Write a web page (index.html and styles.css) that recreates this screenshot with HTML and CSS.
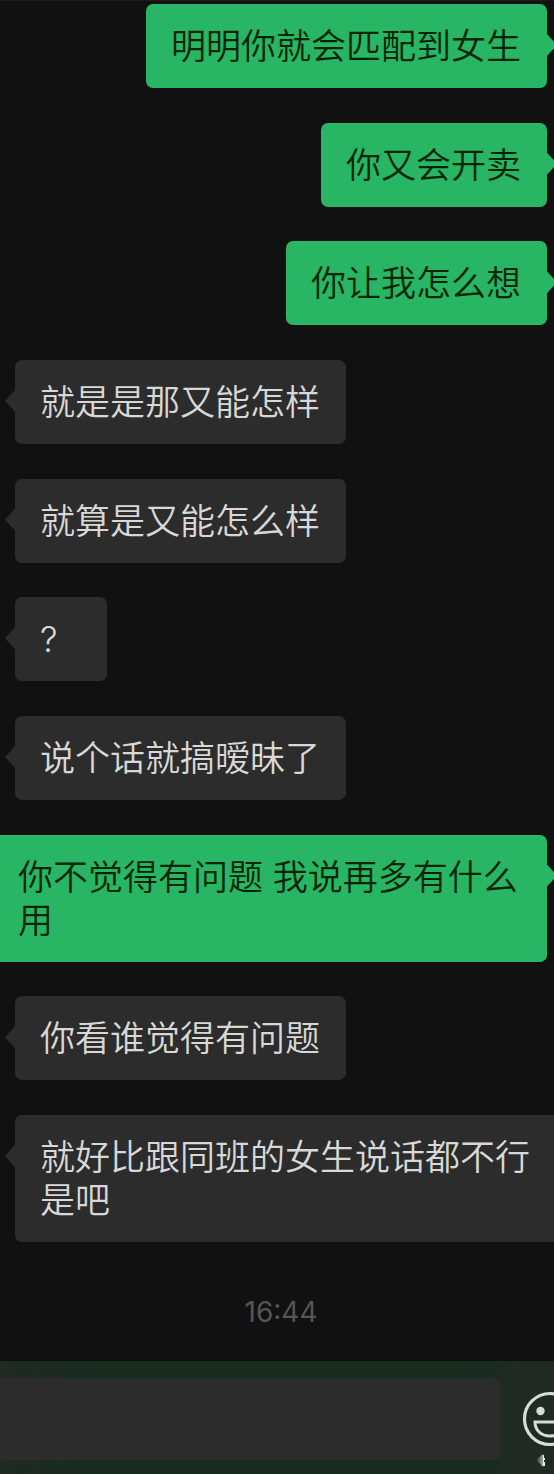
FILE: index.html
```html
<!DOCTYPE html>
<html lang="zh-CN">
<head>
<meta charset="utf-8">
<meta name="viewport" content="width=device-width, initial-scale=1">
<title>聊天</title>
<link rel="stylesheet" href="styles.css">
</head>
<body>
<main class="chat">
  <ul class="messages">
    <li class="bubble sent">明明你就会匹配到女生</li>
    <li class="bubble sent">你又会开卖</li>
    <li class="bubble sent">你让我怎么想</li>
    <li class="bubble received">就是是那又能怎样</li>
    <li class="bubble received">就算是又能怎么样</li>
    <li class="bubble received">?</li>
    <li class="bubble received">说个话就搞暧昧了</li>
    <li class="bubble sent long">你不觉得有问题 我说再多有什么用</li>
    <li class="bubble received">你看谁觉得有问题</li>
    <li class="bubble received long">就好比跟同班的女生说话都不行是吧</li>
  </ul>
  <time class="stamp" datetime="16:44">16:44</time>
</main>
<footer class="composer">
  <input class="field" type="text" aria-label="消息">
  <button class="emoji" type="button" aria-label="表情">
    <svg class="face" viewBox="0 0 56 56" aria-hidden="true">
      <defs>
        <linearGradient id="glow" x1="0" x2="1">
          <stop offset="0" stop-color="#dfe5df" stop-opacity="0"/>
          <stop offset="1" stop-color="#dfe5df" stop-opacity=".7"/>
        </linearGradient>
      </defs>
      <circle cx="28" cy="28" r="25.500" fill="none" stroke="#d5ddd6" stroke-width="3.2"/>
      <circle cx="18.500" cy="20" r="4.200" fill="#d5ddd6"/>
      <circle cx="37.500" cy="20" r="4.200" fill="#d5ddd6"/>
      <path d="M13 31H43C43 39 37 45 28 45S13 39 13 31Z" fill="none" stroke="#d5ddd6" stroke-width="3"/>
      <path d="M14 69L21 63V76Z" fill="url(#glow)"/>
      <path d="M21 64H22V67H23V69H22V71H23V75H21Z" fill="#e8ece8"/>
    </svg>
  </button>
</footer>
</body>
</html>
```
FILE: styles.css
```css
* {
  box-sizing: border-box;
}

body {
  margin: 0;
  min-height: 100vh;
  display: flex;
  flex-direction: column;
  overflow-x: hidden;
  background: #111111;
  font-family: Inter, "Noto Sans CJK SC", sans-serif;
}

.chat {
  flex: 1;
  display: flex;
  flex-direction: column;
  overflow: hidden;
  border-top: 1px solid #1b1b1b;
}

.messages {
  flex: 1;
  display: flex;
  flex-direction: column;
  justify-content: space-between;
  margin: 0;
  padding: 3px 7px 0 15px;
  list-style: none;
}

.bubble {
  position: relative;
  min-width: 92px;
  padding: 21px 26px 20px 25px;
  border-radius: 7px;
  font-size: 35px;
  font-weight: 350;
  line-height: 43px;
}

.bubble::before {
  content: "";
  position: absolute;
  top: 30px;
  width: 10px;
  height: 22px;
  background: inherit;
}

.long {
  width: 100vw;
}

.sent {
  align-self: flex-end;
  background: #28b564;
  color: #052509;
}

.sent::before {
  left: 100%;
  clip-path: polygon(0 0, 100% 50%, 0 100%);
}

.received {
  align-self: flex-start;
  background: #2c2c2c;
  color: #d8d8d8;
}

.received::before {
  right: 100%;
  clip-path: polygon(100% 0, 0 50%, 100% 100%);
}

.stamp {
  align-self: center;
  padding: 52px 0 31px 8px;
  color: #555555;
  font-size: 28px;
  line-height: 36px;
}

.composer {
  display: flex;
  align-items: center;
  gap: 22px;
  padding: 17px 0 14px;
  overflow: hidden;
  background: linear-gradient(90deg, #202a22, #182c20 16%, #182c20 86%, #202a23 94%);
}

.field {
  flex: 1;
  min-width: 0;
  height: 82px;
  margin-left: -8px;
  padding: 0 24px;
  border: 0;
  border-radius: 7px;
  background: #2c2c2c;
  color: #d8d8d8;
  font: inherit;
  font-size: 35px;
}

.emoji {
  flex: none;
  width: 32px;
  height: 56px;
  padding: 0;
  border: 0;
  background: none;
}

.face {
  display: block;
  width: 56px;
  height: 56px;
  overflow: visible;
}
```
